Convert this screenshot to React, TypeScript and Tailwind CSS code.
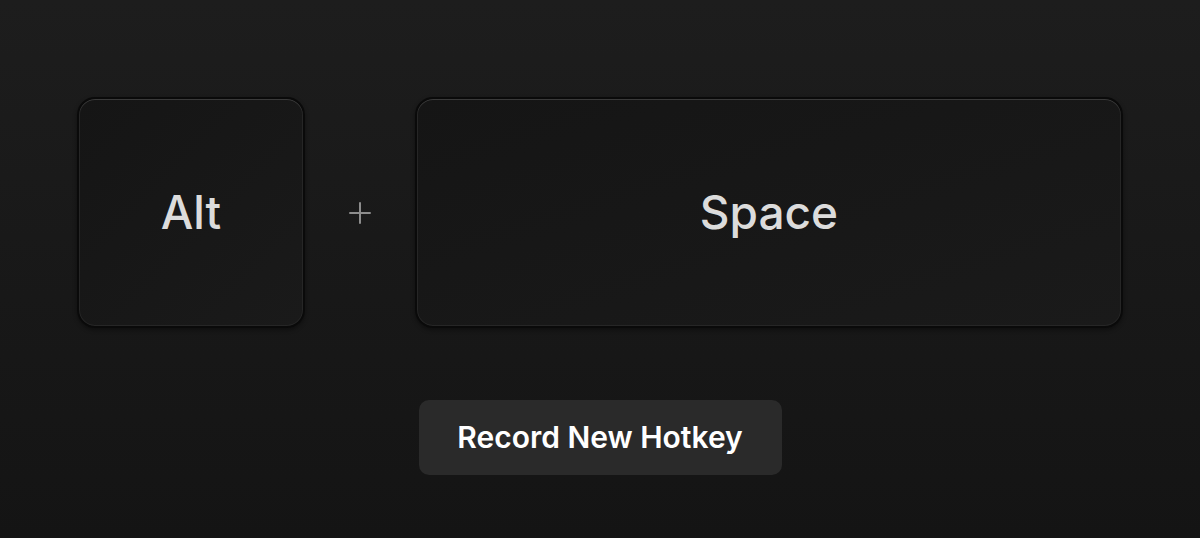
export default function App() {
  const font = { fontFamily: "Inter, 'Noto Sans', sans-serif" };

  return (
    <main
      className="flex h-[538px] w-full flex-col items-center bg-gradient-to-b from-[#1d1d1d] to-[#141414] pt-[97px]"
      style={font}
    >
      <div className="flex items-center">
        <Key label="Alt" className="w-[228px]" />
        <div className="flex w-[110px] items-center justify-center">
          <svg width="26" height="26" viewBox="0 0 26 26" className="text-[#8c8c8c]">
            <path d="M13 3v20M3 13h20" stroke="currentColor" strokeWidth="2" strokeLinecap="round" />
          </svg>
        </div>
        <Key label="Space" className="w-[708px]" />
      </div>

      <button className="mt-[72px] h-[75px] w-[363px] rounded-[10px] bg-[#2a2a2a] text-[30px] font-semibold text-white">
        Record New Hotkey
      </button>
    </main>
  );
}

function Key({ label, className }: { label: string; className: string }) {
  return (
    <div
      className={`flex h-[231px] items-center justify-center rounded-[18px] border-2 border-[#0a0a0a] bg-gradient-to-br from-[#151515] to-[#1a1a1a] shadow-[inset_0_1px_0_#3a3a3a,inset_0_0_0_1px_#262626,0_2px_4px_rgba(0,0,0,0.4)] ${className}`}
    >
      <span className="text-[46px] font-medium text-[#dcdcdc]">{label}</span>
    </div>
  );
}
